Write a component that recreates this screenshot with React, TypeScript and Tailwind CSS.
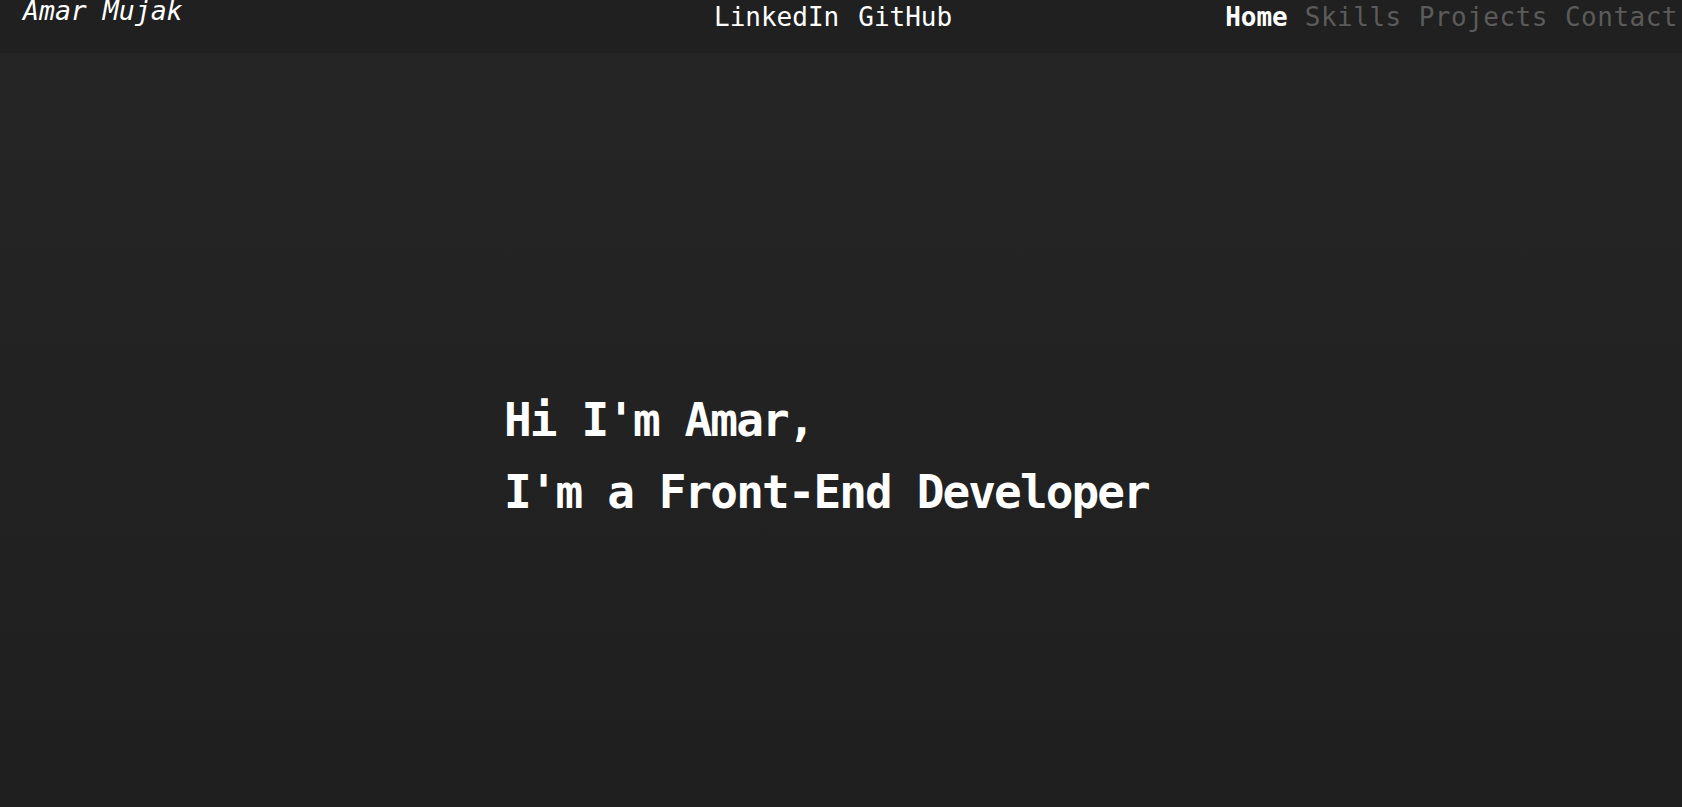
const mono = "font-['DejaVu_Sans_Mono','Liberation_Mono',monospace]";

function Header() {
    return (
        <header className="flex h-[53px] items-start bg-[#202020] text-white">
            {/* Logo */}
            <div className="w-[714px] shrink-0 pl-[23px]">
                <a className={`${mono} -mt-[2px] block text-[26.5px] italic leading-[26px]`}>Amar Mujak</a>
            </div>

            {/* Socials */}
            <div className="flex gap-[19px] pt-[2px] text-[26px] leading-[30px]">
                <a className={mono}>LinkedIn</a>
                <a className={mono}>GitHub</a>
            </div>

            {/* Nav */}
            <nav className="ml-auto flex items-start gap-[17px] pr-[4px] pt-[2px] text-[26px] leading-[30px]">
                <a className={`${mono} font-bold text-white`}>Home</a>
                <a className={`${mono} tracking-[0.5px] text-[#5b5b5b]`}>Skills</a>
                <a className={`${mono} tracking-[0.5px] text-[#5b5b5b]`}>Projects</a>
                <a className={`${mono} tracking-[0.5px] text-[#5b5b5b]`}>Contact</a>
            </nav>
        </header>
    );
}

export default function App() {
    return (
        <div className="flex min-h-[807px] flex-col overflow-hidden bg-[#202020]">
            <Header />
            <main className="flex-1 bg-gradient-to-b from-[#252525] to-[#1f1f1f] pl-[504px] pt-[331px]">
                <h1 className={`${mono} text-[46px] font-bold leading-[72px] tracking-[-1.9px] text-white`}>
                    Hi I'm Amar,
                    <br />
                    I'm a Front-End Developer
                </h1>
            </main>
        </div>
    );
}
